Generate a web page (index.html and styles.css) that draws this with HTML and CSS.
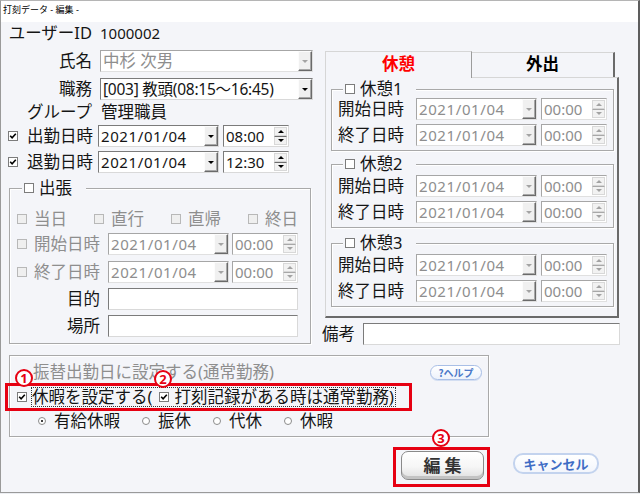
FILE: index.html
```html
<!DOCTYPE html>
<html lang="ja">
<head>
<meta charset="utf-8">
<title>打刻データ - 編集 -</title>
<link rel="stylesheet" href="styles.css">
</head>
<body>
<div class="win">
  <div class="title">打刻データ - 編集 -</div>
  <div class="main">
    <div class="top">
      <div class="left">
        <div class="row r-id"><span class="lbl">ユーザーID</span><span class="num idv">1000002</span></div>
        <div class="row r-name"><span class="lbl">氏名</span>
          <div class="box dis w213"><span class="bt">中杉 次男</span><span class="dd"><i class="arr"></i></span></div>
        </div>
        <div class="row r-job"><span class="lbl">職務</span>
          <div class="box w213"><span class="bt job">[003] 教頭(08:15〜16:45)</span><span class="dd"><i class="arr"></i></span></div>
        </div>
        <div class="row r-grp"><span class="lbl">グループ</span><span class="gv">管理職員</span></div>
        <div class="row r-in">
          <span class="cb"><svg viewBox="0 0 8 8" width="8" height="8"><path d="M1.2 3.8 L3.1 5.8 L6.8 1.8" fill="none" stroke="#000" stroke-width="1.6"/></svg></span>
          <span class="lbl2">出勤日時</span>
          <div class="box date"><span class="bt num dt">2021/01/04</span><span class="dd"><i class="arr"></i></span></div>
          <div class="box time"><span class="bt num">08:00</span><span class="sp"><i class="up"></i><i class="dn"></i></span></div>
        </div>
        <div class="row r-out">
          <span class="cb"><svg viewBox="0 0 8 8" width="8" height="8"><path d="M1.2 3.8 L3.1 5.8 L6.8 1.8" fill="none" stroke="#000" stroke-width="1.6"/></svg></span>
          <span class="lbl2">退勤日時</span>
          <div class="box date"><span class="bt num dt">2021/01/04</span><span class="dd"><i class="arr"></i></span></div>
          <div class="box time"><span class="bt num">12:30</span><span class="sp"><i class="up"></i><i class="dn"></i></span></div>
        </div>

        <div class="grp trip">
          <div class="lg"><span class="cb"></span><span class="lgt">出張</span></div>
          <div class="trow1 gray">
            <span class="ti"><span class="cb off"></span><span class="tl">当日</span></span>
            <span class="ti"><span class="cb off"></span><span class="tl">直行</span></span>
            <span class="ti"><span class="cb off"></span><span class="tl">直帰</span></span>
            <span class="ti"><span class="cb off"></span><span class="tl">終日</span></span>
          </div>
          <div class="row trow t1">
            <span class="cb off"></span><span class="tl2 gray">開始日時</span>
            <div class="box dis date tdate"><span class="bt num dt">2021/01/04</span><span class="dd"><i class="arr"></i></span></div>
            <div class="box dis time ttime"><span class="bt num">00:00</span><span class="sp"><i class="up"></i><i class="dn"></i></span></div>
          </div>
          <div class="row trow t2">
            <span class="cb off"></span><span class="tl2 gray">終了日時</span>
            <div class="box dis date tdate"><span class="bt num dt">2021/01/04</span><span class="dd"><i class="arr"></i></span></div>
            <div class="box dis time ttime"><span class="bt num">00:00</span><span class="sp"><i class="up"></i><i class="dn"></i></span></div>
          </div>
          <div class="row trow t3"><span class="tl3">目的</span><div class="box wide"></div></div>
          <div class="row trow t3"><span class="tl3">場所</span><div class="box wide"></div></div>
        </div>
      </div>

      <div class="right">
        <div class="tabs">
          <div class="tab act">休憩</div>
          <div class="tab other">外出</div>
        </div>
        <div class="panel">
          <div class="grp pg pg1">
            <div class="lg"><span class="cb"></span><span class="lgt">休憩1</span></div>
            <div class="row prow">
              <span class="plbl">開始日時</span>
              <div class="box dis date"><span class="bt num dt">2021/01/04</span><span class="dd"><i class="arr"></i></span></div>
              <div class="box dis time"><span class="bt num">00:00</span><span class="sp"><i class="up"></i><i class="dn"></i></span></div>
            </div>
            <div class="row prow p2">
              <span class="plbl">終了日時</span>
              <div class="box dis date"><span class="bt num dt">2021/01/04</span><span class="dd"><i class="arr"></i></span></div>
              <div class="box dis time"><span class="bt num">00:00</span><span class="sp"><i class="up"></i><i class="dn"></i></span></div>
            </div>
          </div>
          <div class="grp pg pg2">
            <div class="lg"><span class="cb"></span><span class="lgt">休憩2</span></div>
            <div class="row prow p1b">
              <span class="plbl">開始日時</span>
              <div class="box dis date"><span class="bt num dt">2021/01/04</span><span class="dd"><i class="arr"></i></span></div>
              <div class="box dis time"><span class="bt num">00:00</span><span class="sp"><i class="up"></i><i class="dn"></i></span></div>
            </div>
            <div class="row prow p2">
              <span class="plbl">終了日時</span>
              <div class="box dis date"><span class="bt num dt">2021/01/04</span><span class="dd"><i class="arr"></i></span></div>
              <div class="box dis time"><span class="bt num">00:00</span><span class="sp"><i class="up"></i><i class="dn"></i></span></div>
            </div>
          </div>
          <div class="grp pg pg3">
            <div class="lg"><span class="cb"></span><span class="lgt">休憩3</span></div>
            <div class="row prow p1b">
              <span class="plbl">開始日時</span>
              <div class="box dis date"><span class="bt num dt">2021/01/04</span><span class="dd"><i class="arr"></i></span></div>
              <div class="box dis time"><span class="bt num">00:00</span><span class="sp"><i class="up"></i><i class="dn"></i></span></div>
            </div>
            <div class="row prow p2">
              <span class="plbl">終了日時</span>
              <div class="box dis date"><span class="bt num dt">2021/01/04</span><span class="dd"><i class="arr"></i></span></div>
              <div class="box dis time"><span class="bt num">00:00</span><span class="sp"><i class="up"></i><i class="dn"></i></span></div>
            </div>
          </div>
        </div>
        <div class="row biko"><span class="bl">備考</span><div class="box bbox"></div></div>
      </div>
    </div>

    <div class="bgrp">
      <div class="bl1"><span class="gray">振替出勤日に設定する(通常勤務)</span><span class="help">?ヘルプ</span></div>
      <div class="bl2">
        <span class="cb"><svg viewBox="0 0 8 8" width="8" height="8"><path d="M1.2 3.8 L3.1 5.8 L6.8 1.8" fill="none" stroke="#000" stroke-width="1.6"/></svg></span>
        <span class="focus">休暇を設定する(<span class="cb cb2"><svg viewBox="0 0 8 8" width="8" height="8"><path d="M1.2 3.8 L3.1 5.8 L6.8 1.8" fill="none" stroke="#000" stroke-width="1.6"/></svg></span>打刻記録がある時は通常勤務)</span>
      </div>
      <div class="bl3">
        <span class="ri"><span class="rd on"></span>有給休暇</span>
        <span class="ri"><span class="rd"></span>振休</span>
        <span class="ri"><span class="rd"></span>代休</span>
        <span class="ri"><span class="rd"></span>休暇</span>
      </div>
    </div>
    <div class="btns">
      <div class="bedit">編 集</div>
      <div class="bcancel">キャンセル</div>
    </div>
  </div>

  <div class="redbox r1"></div>
  <div class="redbox r2"></div>
  <div class="mark m1">1</div>
  <div class="mark m2">2</div>
  <div class="mark m3">3</div>
</div>
</body>
</html>
```

FILE: styles.css
```css
* { box-sizing: border-box; }
html, body { margin: 0; padding: 0; }
body {
  width: 640px; height: 494px; overflow: hidden;
  background: #eceef2;
  font-family: "Noto Sans", "Noto Sans CJK JP", sans-serif;
  font-size: 16.5px; line-height: 20px; color: #151515;
}
.win {
  position: relative; width: 640px; height: 493px;
  background: #f4f5f9;
  border: 1px solid #9a9a9a; border-top-color: #b5b5b5;
  border-right: 2px solid #5d5d5d;
}
.title { height: 21px; background: #fff; font-size: 9px; line-height: 18px; padding-left: 2px; color: #000; }
.main { padding-left: 7px; }
.top { display: flex; height: 323px; }
.left { width: 305px; display: flex; flex-direction: column; }
.row { display: flex; align-items: center; height: 22px; flex: none; }
.lbl { width: 84px; text-align: right; margin-right: 8px; flex: none; white-space: nowrap; }
.r-name, .r-job { margin-top: 6px; }
.r-grp { margin-top: 1px; }
.r-in { margin-top: 2px; }
.r-out { margin-top: 4px; }
.gv { margin-left: 1px; }
.num { font-size: 15px; }
.idv { font-size: 15px; }
.gray { color: #8e8e8e; }

/* input boxes */
.box {
  height: 22px; display: flex; align-items: stretch; flex: none;
  background: #fff; border: 1px solid;
  border-color: #7b7b7b #d9d9d9 #d9d9d9 #7b7b7b;
}
.bt { flex: 1; min-width: 0; padding-left: 2px; white-space: nowrap; line-height: 20px; }
.bt.dt { letter-spacing: 0.6px; }
.bt.job { font-size: 15.5px; letter-spacing: -0.25px; }
.box.dis { color: #8e8e8e; border-color: #a6a6a6 #e0e0e0 #e0e0e0 #a6a6a6; }
.w213 { width: 213px; }
.date { width: 121px; }
.time { width: 66px; margin-left: 4px; }
.dd {
  width: 14px; flex: none; background: #f0f0f0;
  border: 1px solid; border-color: #fcfcfc #6a6a6a #6a6a6a #fcfcfc;
  box-shadow: inset -1px -1px 0 #a8a8a8;
  display: flex; align-items: center; justify-content: center;
}
.arr { display: block; width: 0; height: 0; border-left: 3px solid transparent; border-right: 3px solid transparent; border-top: 3px solid #000; }
.dis .arr { border-top-color: #a3a3a3; }
.sp { width: 13px; flex: none; display: flex; flex-direction: column; background: #f2f2f2; margin: 1px 1px 1px 0; }
.sp i { flex: 1; display: flex; align-items: center; justify-content: center; border: 1px solid #d8d8d8; }
.sp i + i { border-top: 1px solid #6e6e6e; }
.sp .up::after { content: ""; border-left: 3px solid transparent; border-right: 3px solid transparent; border-bottom: 3px solid #000; }
.sp .dn::after { content: ""; border-left: 3px solid transparent; border-right: 3px solid transparent; border-top: 3px solid #000; }
.dis .sp i + i { border-top-color: #a8a8a8; }
.dis .sp .up::after { border-bottom-color: #a3a3a3; }
.dis .sp .dn::after { border-top-color: #a3a3a3; }

/* checkbox / radio */
.cb {
  display: inline-flex; align-items: center; justify-content: center; flex: none;
  width: 10px; height: 10px; background: #fff;
  border: 1px solid #7c7c7c;
}
.cb.off { background: #efefef; border-color: #b8b8b8; }
.lbl2 { margin-left: 9px; width: 66px; margin-right: 5px; flex: none; }
.rd {
  display: inline-block; flex: none; width: 8px; height: 8px; border-radius: 50%;
  border: 1px solid #8c8c8c; background: #fff; position: relative;
}
.rd.on::after { content: ""; position: absolute; left: 2px; top: 2px; width: 2px; height: 2px; background: #000; border-radius: 50%; }

/* group boxes */
.grp {
  border: 1px solid #a9a9a9;
  box-shadow: inset 1px 1px 0 #fff, 1px 1px 0 #fff;
  display: flex; flex-direction: column; flex: none;
}
.lg {
  align-self: flex-start; display: flex; align-items: center;
  height: 18px; line-height: 18px; margin-top: -10px; margin-left: 5px;
  background: #f4f5f9; padding: 0 14px 0 2px;
}
.lgt { margin-left: 5px; line-height: 18px; }

.trip { margin-top: 15px; margin-left: 1px; width: 302px; padding: 0 0 6px 7px; }
.trow1 { display: grid; grid-template-columns: 77px 77px 77px 77px; height: 22px; margin-top: 11px; align-items: center; }
.ti { display: flex; align-items: center; }
.tl { margin-left: 7px; }
.t1 { margin-top: 3px; }
.t2 { margin-top: 6px; }
.t3 { margin-top: 5px; }
.tl2 { margin-left: 7px; width: 66px; flex: none; }
.tdate { margin-left: 8px; }
.ttime { margin-left: 3px; }
.tl3 { width: 83px; text-align: right; flex: none; }
.wide { width: 190px; margin-left: 8px; }

/* right side */
.right { margin-left: 12px; width: 295px; margin-top: 29px; display: flex; flex-direction: column; }
.tabs { display: flex; height: 26px; align-items: flex-start; }
.tab { display: flex; align-items: center; justify-content: center; font-weight: bold; padding-bottom: 3px; }
.tab.act {
  width: 147px; height: 27px; position: relative; z-index: 1;
  color: #f00; background: #f4f5f9;
  border-top: 1px solid #d6d6d6; border-left: 1px solid #d6d6d6; border-right: 1px solid #9c9c9c;
}
.tab.other {
  width: 143px; height: 25px; margin-top: 1px; color: #000;
  border-top: 1px solid #d6d6d6; border-right: 2px solid #6a6a6a;
}
.panel {
  width: 294px; height: 241px; flex: none;
  border: 1px solid #d6d6d6; border-right: 2px solid #6a6a6a; border-bottom: 2px solid #6a6a6a;
  padding: 11px 0 0 5px;
  display: flex; flex-direction: column;
}
.pg { width: 283px; padding: 0 0 4px 6px; }
.pg2 { margin-top: 13px; }
.pg3 { margin-top: 15px; }
.prow { margin-top: 0; }
.p1b { margin-top: 2px; }
.p2 { margin-top: 4px; }
.plbl { width: 66px; margin-right: 12px; flex: none; }
.biko { margin-top: 5px; margin-left: -3px; }
.bl { width: 33px; margin-right: 8px; flex: none; }
.bbox { width: 257px; }

/* bottom */
.bgrp {
  margin-top: 10px; margin-left: 1px; width: 480px;
  border: 1px solid #a9a9a9; box-shadow: inset 1px 1px 0 #fff, 1px 1px 0 #fff;
  padding: 7px 6px 5px 0;
}
.bl1 { height: 18px; display: flex; align-items: center; justify-content: space-between; padding-left: 23px; }
.help {
  width: 52px; height: 15px; border-radius: 8px;
  border: 1px solid #a9bfe6; background: linear-gradient(#ffffff, #edf2fb);
  box-shadow: 0 1px 0 #d3def2;
  color: #4a78c8; font-weight: bold; font-size: 10px; line-height: 13px; text-align: center;
  font-family: "Noto Sans CJK JP", sans-serif;
}
.bl2 { height: 20px; margin-top: 6px; display: flex; align-items: center; padding-left: 7px; }
.focus { display: flex; align-items: center; height: 20px; margin-left: 4px; padding: 0 2px 0 1px; outline: 1px dotted #333; outline-offset: -1px; white-space: nowrap; }
.cb2 { margin-left: 7px; margin-right: 5px; }
.bl3 { height: 20px; margin-top: 4px; display: flex; align-items: center; padding-left: 28px; gap: 22px; }
.ri { display: flex; align-items: center; }
.ri .rd { margin-right: 8px; }

.btns { display: flex; justify-content: flex-end; align-items: flex-start; gap: 29px; margin-top: 14px; padding-right: 39px; }
.bedit {
  width: 83px; height: 29px; border-radius: 7px;
  border: 1px solid #8a8a8a;
  background: linear-gradient(#ffffff 0%, #f6f6f6 55%, #dedede 100%);
  box-shadow: inset 0 -3px 0 #c3c3c3;
  color: #333; font-weight: bold; font-size: 17px; line-height: 25px; text-align: center;
  font-family: "Noto Sans CJK JP", sans-serif;
}
.bcancel {
  width: 86px; height: 21px; margin-top: 2px; border-radius: 10px;
  border: 2px solid #c3d3ee; background: linear-gradient(#ffffff, #f3f6fc);
  color: #3f6dc5; font-weight: bold; font-size: 13px; line-height: 17px; text-align: center;
  font-family: "Noto Sans CJK JP", sans-serif;
}

/* annotations */
.redbox { position: absolute; border: 3px solid #e60012; }
.r1 { left: 4px; top: 382px; width: 407px; height: 28px; }
.r2 { left: 392px; top: 446px; width: 97px; height: 40px; }
.mark {
  position: absolute; width: 18px; height: 18px; border-radius: 50%;
  border: 2px solid #e60012; background: #fff; color: #e60012;
  font: bold 13px/14px "Noto Sans", sans-serif; text-align: center; z-index: 2;
}
.m1 { left: 14px; top: 368px; }
.m2 { left: 153px; top: 369px; }
.m3 { left: 431px; top: 428px; }
```
